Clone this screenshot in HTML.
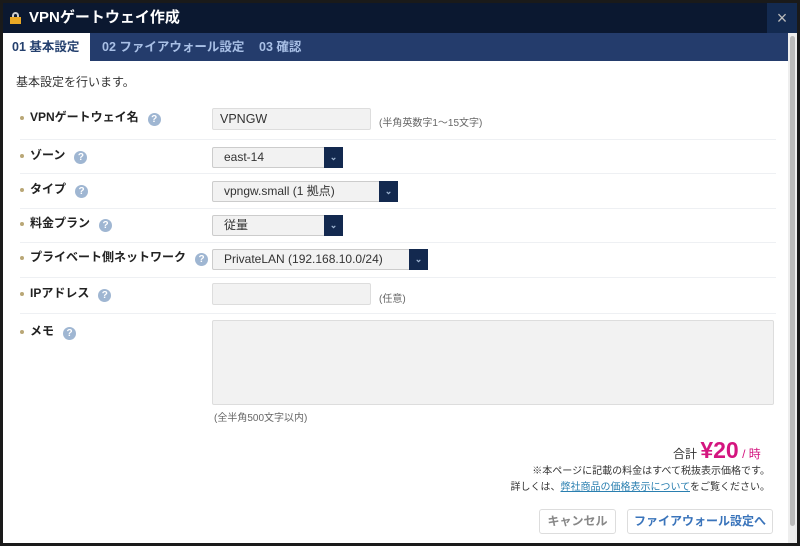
<!DOCTYPE html>
<html><head><meta charset="utf-8"><style>
*{box-sizing:border-box;margin:0;padding:0}
body{width:800px;height:546px;background:#1a1a1a;font-family:"Liberation Sans","Noto Sans CJK JP",sans-serif;position:relative;overflow:hidden;font-size:12px;color:#333}
.dlg{position:absolute;left:3px;top:3px;width:794px;height:540px;background:#fff}
.title{position:absolute;left:0;top:0;width:794px;height:30px;background:#0b1830;color:#fff;font-weight:bold;font-size:15px;line-height:30px;padding-left:26px}
.close{position:absolute;right:0;top:0;width:30px;height:30px;background:#132a50;color:#bbb;font-size:18px;text-align:center;line-height:30px}
.tabs{position:absolute;left:0;top:30px;width:785px;height:28px;background:#243c6c}
.tab{position:absolute;top:0;height:28px;line-height:28px;font-weight:bold;color:#a9c0e6;font-size:12.5px}
.tab.a{background:#fff;color:#24406e;left:0;width:87px;padding-left:9px}
.sb{position:absolute;left:785px;top:30px;width:9px;height:510px;background:#eee}
.sb i{position:absolute;left:2px;top:3px;width:5px;height:490px;background:#bbb;border-radius:3px}
.abs{position:absolute}
.row{position:absolute;left:17px;width:756px;border-top:1px solid #eef0f3}
.lbl{position:absolute;left:17px;font-weight:bold;font-size:12px;color:#222}
.lbl:before{content:"";display:inline-block;width:4px;height:4px;border-radius:2px;background:#b9a776;margin-right:6px;vertical-align:middle}
.q{display:inline-block;width:13px;height:13px;border-radius:7px;background:#9fb6d2;color:#fff;font-size:10px;text-align:center;line-height:13px;margin-left:9px;vertical-align:-1px}
.inp{position:absolute;left:209px;background:#f2f2f2;border:1px solid #ddd;border-radius:2px;height:22px;font-size:12.5px;line-height:20px;padding-left:7px}
.sel{position:absolute;left:209px;height:21px;background:#f2f2f2;border:1px solid #ccc;border-radius:2px;font-size:12px;line-height:19px;padding-left:11px}
.sel b{position:absolute;right:-1px;top:-1px;width:19px;height:21px;background:#13294f;color:#9fb6d2;font-size:9px;text-align:center;line-height:20px}
.note{position:absolute;font-size:10px;color:#666}
.btn{position:absolute;top:506px;height:25px;border:1px solid #ddd;border-radius:3px;background:#fff;font-weight:bold;font-size:12px;line-height:23px;text-align:center}
</style></head><body>
<div class="dlg">
<div class="title"><span class="abs" style="left:7px;top:9px;width:11px;height:12px;"><span class="abs" style="left:2px;top:0;width:7px;height:7px;border:2px solid #ccc;border-bottom:none;border-radius:4px 4px 0 0"></span><span class="abs" style="left:0;top:5px;width:11px;height:7px;background:#e9a825"></span></span>VPNゲートウェイ作成</div>
<div class="close">×</div>
<div class="tabs"><div class="tab a">01 基本設定</div><div class="tab" style="left:99px">02 ファイアウォール設定</div><div class="tab" style="left:256px">03 確認</div></div>
<div class="sb"><i></i></div>
<div class="abs" style="left:13px;top:70px;font-size:12px">基本設定を行います。</div>

<div class="lbl" style="top:105px">VPNゲートウェイ名<span class="q">?</span></div>
<div class="inp" style="top:105px;width:159px">VPNGW</div>
<div class="note" style="left:376px;top:111px">(半角英数字1〜15文字)</div>
<div class="row" style="top:136px"></div>

<div class="lbl" style="top:143px">ゾーン<span class="q">?</span></div>
<div class="sel" style="top:144px;width:131px">east-14<b>⌄</b></div>
<div class="row" style="top:170px"></div>

<div class="lbl" style="top:177px">タイプ<span class="q">?</span></div>
<div class="sel" style="top:178px;width:186px">vpngw.small (1 拠点)<b>⌄</b></div>
<div class="row" style="top:205px"></div>

<div class="lbl" style="top:211px">料金プラン<span class="q">?</span></div>
<div class="sel" style="top:212px;width:131px">従量<b>⌄</b></div>
<div class="row" style="top:239px"></div>

<div class="lbl" style="top:245px">プライベート側ネットワーク<span class="q">?</span></div>
<div class="sel" style="top:246px;width:216px">PrivateLAN (192.168.10.0/24)<b>⌄</b></div>
<div class="row" style="top:274px"></div>

<div class="lbl" style="top:281px">IPアドレス<span class="q">?</span></div>
<div class="inp" style="top:280px;width:159px"></div>
<div class="note" style="left:376px;top:287px">(任意)</div>
<div class="row" style="top:310px"></div>

<div class="lbl" style="top:319px">メモ<span class="q">?</span></div>
<div class="inp" style="top:317px;width:562px;height:85px"></div>
<div class="note" style="left:211px;top:406px">(全半角500文字以内)</div>

<div class="abs" style="left:670px;top:434px;font-size:12px">合計 <span style="color:#d4157f;font-weight:bold;font-size:23px">¥20</span> <span style="color:#d4157f">/ 時</span></div>
<div class="abs" style="right:27px;top:461px;font-size:10px;text-align:right;line-height:16px">※本ページに記載の料金はすべて税抜表示価格です。<br>詳しくは、<span style="color:#2a7fb0;text-decoration:underline">弊社商品の価格表示について</span>をご覧ください。</div>
<div class="btn" style="left:536px;width:77px;color:#888">キャンセル</div>
<div class="btn" style="left:624px;width:146px;color:#3a74bb">ファイアウォール設定へ</div>
</div>
</body></html>
